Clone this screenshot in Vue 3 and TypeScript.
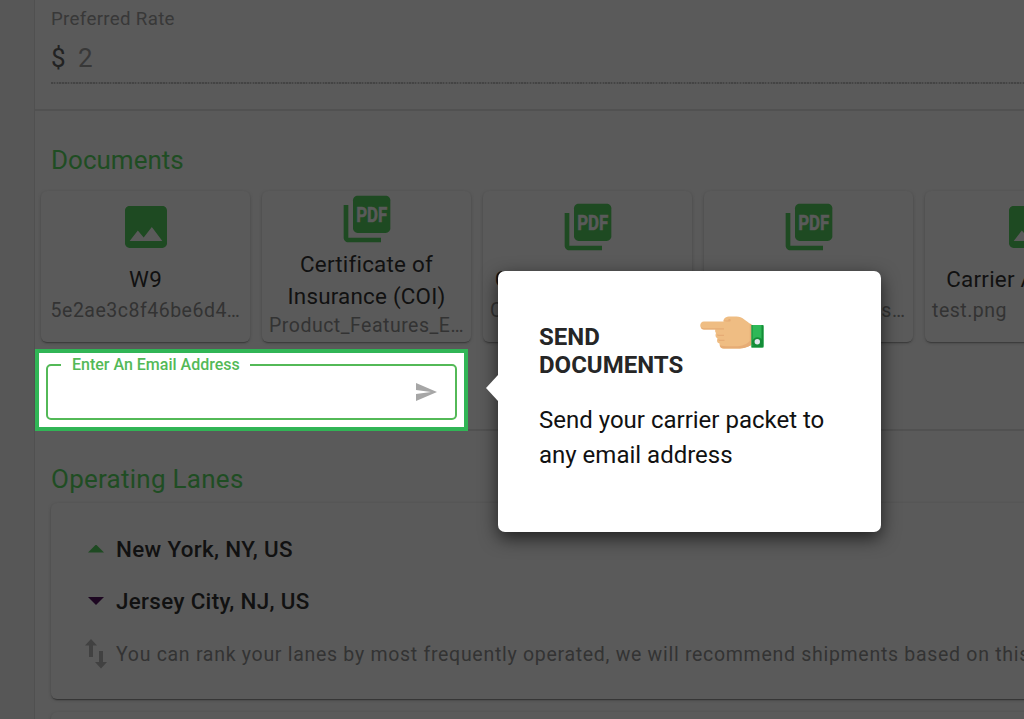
<script setup lang="ts">
interface DocumentCard {
  title: string
  file: string
  kind: 'image' | 'pdf'
  tall?: boolean
  start?: boolean
}

const documents: DocumentCard[] = [
  { title: 'W9', file: '5e2ae3c8f46be6d4…', kind: 'image' },
  { title: 'Certificate of Insurance (COI)', file: 'Product_Features_E…', kind: 'pdf', tall: true },
  { title: 'Carrier Agreement', file: 'Carrier_Agreeme…', kind: 'pdf', start: true },
  { title: 'CARB', file: 'Product_Features_s…', kind: 'pdf' },
  { title: 'Carrier Authority', file: 'test.png', kind: 'image', start: true },
]
</script>

<template>
  <div class="screen">
    <main class="panel">
      <section class="rate">
        <div class="rate-label">Preferred Rate</div>
        <div class="rate-field"><span class="currency">$</span><span class="rate-value">2</span></div>
        <div class="rate-line"></div>
      </section>

      <section class="documents">
        <h2 class="heading">Documents</h2>
        <div class="cards">
          <article v-for="doc in documents" :key="doc.title" class="card" :class="{ tall: doc.tall }">
            <svg v-if="doc.kind === 'image'" class="doc-icon" viewBox="0 0 24 24">
              <path d="M21 19V5c0-1.1-.9-2-2-2H5c-1.1 0-2 .9-2 2v14c0 1.1.9 2 2 2h14c1.1 0 2-.9 2-2zM8.5 13.5l2.5 3.01L14.5 12l4.5 6H5l3.5-4.5z" />
            </svg>
            <svg v-else class="doc-icon" viewBox="0 0 24 24">
              <path d="M20 2H8c-1.1 0-2 .9-2 2v12c0 1.1.9 2 2 2h12c1.1 0 2-.9 2-2V4c0-1.1-.9-2-2-2z" />
              <path d="M4 6H2v14c0 1.1.9 2 2 2h14v-2H4V6z" />
              <text class="pdf-label" x="7.4" y="13.1" textLength="13.3" lengthAdjust="spacingAndGlyphs">PDF</text>
            </svg>
            <div class="doc-title">{{ doc.title }}</div>
            <div class="doc-file" :class="{ start: doc.start }">{{ doc.file }}</div>
          </article>
        </div>
      </section>

      <section class="lanes">
        <h2 class="heading lanes-heading">Operating Lanes</h2>
        <div class="lane-card">
          <div class="lane"><i class="triangle up"></i><span>New York, NY, US</span></div>
          <div class="lane"><i class="triangle down"></i><span>Jersey City, NJ, US</span></div>
          <div class="hint">
            <svg class="swap" viewBox="0 0 22 30">
              <path d="M6 0L0 6.5h4V18h4V6.5h4z" />
              <path d="M16 29.5l6-6.5h-4V12h-4v11h-4z" />
            </svg>
            <span>You can rank your lanes by most frequently operated, we will recommend shipments based on this</span>
          </div>
        </div>
        <div class="next-card"></div>
      </section>
    </main>

    <div class="spotlight">
      <fieldset class="email">
        <legend>Enter An Email Address</legend>
        <svg class="send" viewBox="0 0 24 24"><path d="M2.01 21L23 12 2.01 3 2 10l15 2-15 2z" /></svg>
      </fieldset>
    </div>

    <aside class="tour">
      <header class="tour-head">
        <h3>SEND DOCUMENTS</h3>
        <svg class="hand" viewBox="0 0 64 34">
          <path fill="#efbd83" d="M4 5.5h19.5c0-3.5 2-5 7-5h6c6 0 9 4.500 15 8v20.500c-5 3-10 3.500-16 3.500H24c-3.500 0-4.500-2-4.500-5-2.500-.6-3-3-2-5-2-1-2.500-3-1.500-5.500-1-1-1-2-.7-3.500H4c-5 0-5-8 0-8z" />
          <path fill="#e6ac75" d="M1 11c1 1.2 2 1.2 4 1.2h19v1.3H4c-2 0-3-.9-3-2.500zM23 4.500c2 1.300 5 1 7 1 1 0 1-2.500 0-2.500h-1.500v1.200c-2 .6-4 0-5.500.3zM17 18c2 1.200 4 .8 7 .8V20h-6.500zM18 23c2 1.200 4 .8 6.500.8V25H19zM20 29c3 1.800 8 1.300 15 1.300 7 0 12.500-2.300 14.800-5.300V7.500l1.700 1V29c-5 3-10 3.500-16 3.500H24c-2 0-4-1-4-3.500z" />
          <path fill="#2eb857" d="M51.5 9h12v22.5h-12z" />
          <path fill="#148d38" d="M61.5 9H62a1.5 1.5 0 0 1 1.5 1.5V30a1.5 1.5 0 0 1-1.5 1.5H51.5v-1.700h2A4.600 4.600 0 1 1 61.500 23zM51.500 9h1v22h-1z" />
          <circle cx="57.3" cy="25.7" r="2.7" fill="#e1e8ed" />
        </svg>
      </header>
      <p>Send your carrier packet to any email address</p>
    </aside>
  </div>
</template>

<style>
body {
  margin: 0;
}
</style>

<style scoped>
.screen {
  position: relative;
  width: 1024px;
  height: 719px;
  overflow: hidden;
  background: #575757;
  font-family: Roboto, "Liberation Sans", sans-serif;
  color: #111;
}

.panel {
  box-sizing: border-box;
  height: 719px;
  margin-left: 34px;
  border-left: 1px solid #505050;
  background: #5a5a5a;
  overflow: hidden;
}

.rate {
  box-sizing: border-box;
  height: 111px;
  padding: 7px 0 0 16px;
  border-bottom: 2px solid #515151;
}

.rate-label {
  height: 25px;
  line-height: 24px;
  font-size: 18.7px;
  letter-spacing: 0.32px;
  color: #383838;
}

.rate-field {
  display: flex;
  height: 50px;
  line-height: 52px;
  font-size: 26px;
}

.rate-line {
  height: 2px;
  background: repeating-linear-gradient(90deg, #444 0 1.5px, #525252 1.5px 2.8px);
}

.currency {
  width: 27px;
  color: #222;
}

.rate-value {
  color: #383838;
}

.documents {
  box-sizing: border-box;
  height: 320px;
  padding: 32px 0 0 6px;
  border-bottom: 2px solid #515151;
}

.heading {
  margin: 0 0 0 10px;
  height: 34px;
  line-height: 34px;
  font-size: 26px;
  font-weight: 400;
  color: #1f4d23;
}

.cards {
  display: flex;
  gap: 12px;
  margin-top: 14px;
}

.card {
  display: flex;
  flex: 0 0 209px;
  flex-direction: column;
  align-items: center;
  box-sizing: border-box;
  min-width: 0;
  width: 209px;
  max-width: 209px;
  height: 151px;
  padding: 8px 7px 0;
  border-radius: 6px;
  background: #5a5a5a;
  box-shadow: 0 2px 1px -1px #3c3c3c, 0 1px 3px #464646;
}

.doc-icon {
  flex: none;
  width: 56px;
  height: 56px;
  margin-bottom: 8px;
  fill: #1e4a22;
}

.pdf-label {
  fill: #5a5a5a;
  stroke: #5a5a5a;
  stroke-width: 0.25px;
  font-size: 8.4px;
  font-weight: 700;
}

.doc-title {
  flex: none;
  width: 100%;
  line-height: 32px;
  font-size: 22.4px;
  letter-spacing: 0.22px;
  text-align: center;
}

.doc-file {
  flex: none;
  line-height: 32px;
  font-size: 19.5px;
  letter-spacing: 0.5px;
  white-space: nowrap;
  color: #333;
}

.start {
  align-self: flex-start;
}

.tall {
  padding-top: 0;
}

.tall .doc-icon {
  margin-bottom: 1px;
}

.tall .doc-file {
  line-height: 28px;
}

.lanes {
  padding: 31px 0 0 16px;
}

.lanes-heading {
  margin: 0;
  letter-spacing: 0.26px;
}

.lane-card {
  box-sizing: border-box;
  width: 1010px;
  height: 196px;
  margin-top: 7px;
  padding: 19px 0 0 34px;
  border-radius: 6px;
  background: #5a5a5a;
  box-shadow: 0 2px 1px -1px #353535, 0 1px 3px #464646;
}

.lane {
  display: flex;
  align-items: center;
  height: 53px;
  padding-left: 3px;
  font-size: 22.4px;
  font-weight: 500;
  letter-spacing: 0.34px;
}

.lane + .lane {
  height: 52px;
}

.triangle {
  width: 16px;
  height: 8px;
  margin-right: 12px;
}

.up {
  background: #1e4a22;
  clip-path: polygon(50% 0, 100% 100%, 0 100%);
}

.down {
  background: #1d0721;
  clip-path: polygon(0 0, 100% 0, 50% 100%);
}

.hint {
  display: flex;
  align-items: center;
  height: 53px;
  line-height: 24px;
  font-size: 19.5px;
  letter-spacing: 0.71px;
  white-space: nowrap;
  color: #333;
}

.hint span {
  padding-top: 3px;
}

.swap {
  flex: none;
  width: 22px;
  height: 30px;
  margin-right: 9px;
  fill: #414141;
}

.next-card {
  width: 1010px;
  height: 60px;
  margin-top: 13px;
  border-radius: 6px;
  box-shadow: 0 1px 3px #464646;
}

.spotlight {
  position: absolute;
  left: 35px;
  top: 349px;
  box-sizing: border-box;
  width: 433px;
  height: 82px;
  padding: 2px 7px 7px;
  border: 4px solid #31b556;
  background: #fff;
}

.email {
  display: flex;
  align-items: flex-start;
  justify-content: flex-end;
  box-sizing: border-box;
  width: 411px;
  height: 65px;
  margin: 0;
  padding: 5px 17px 0 13px;
  border: 2px solid #53b957;
  border-radius: 5px;
}

.email legend {
  height: 20px;
  padding: 0 10px 0 11px;
  line-height: 20px;
  font-size: 16px;
  font-weight: 500;
  color: #53b957;
}

.send {
  width: 24px;
  height: 24px;
  fill: #a6a6a6;
}

.tour {
  position: absolute;
  left: 498px;
  top: 271px;
  box-sizing: border-box;
  width: 383px;
  height: 261px;
  padding: 45px 41px 0;
  border-radius: 7px;
  background: #fff;
  box-shadow: 0 6px 18px rgba(0, 0, 0, 0.65);
}

.tour::before {
  content: "";
  position: absolute;
  left: -12px;
  top: 104px;
  width: 12px;
  height: 26px;
  background: #fff;
  clip-path: polygon(0 50%, 100% 0, 100% 100%);
}

.tour-head {
  display: flex;
  align-items: flex-start;
}

.tour h3 {
  width: 161px;
  margin: 7px 0 0;
  line-height: 28px;
  font-size: 24px;
  font-weight: 700;
  color: #262626;
}

.hand {
  width: 64px;
  height: 34px;
}

.tour p {
  margin: 24px 0 0;
  line-height: 35px;
  font-size: 24px;
}
</style>
